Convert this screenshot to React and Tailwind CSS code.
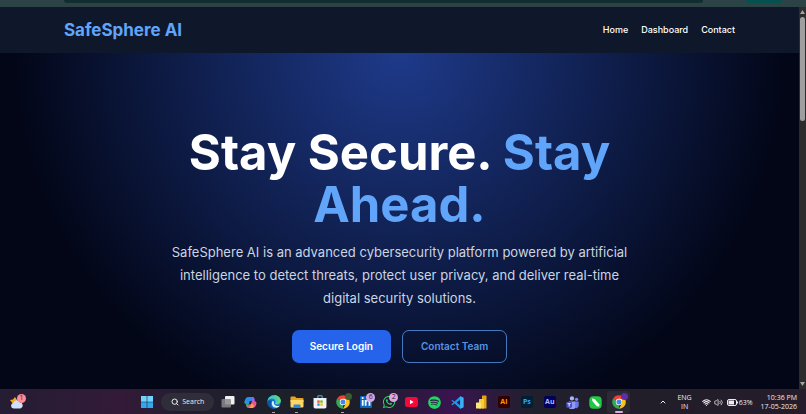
import {
  ChevronUp,
  Search,
  Volume2,
  Wifi,
} from "lucide-react";
import { FaLinkedinIn, FaSpotify, FaWhatsapp } from "react-icons/fa";

const navLinks = ["Home", "Dashboard", "Contact"];

function BrowserEdge() {
  return (
    <div className="flex h-[7px] items-start justify-between bg-[#2b4344] pl-[8%] pr-[3%]">
      <div className="h-[3px] w-[89%] rounded-b-md bg-[#112d2e]" />
      <div className="h-[3px] w-[5%] rounded-b-md bg-[#04514f]" />
    </div>
  );
}

function Navbar() {
  return (
    <nav className="flex h-[46px] items-center justify-between bg-[#0f172a] px-[8%]">
      <a href="#home" className="text-[17px] leading-6 font-bold text-[#60a5fa]">
        SafeSphere AI
      </a>
      <div className="flex gap-[13px]">
        {navLinks.map((link) => (
          <a
            key={link}
            href={`#${link.toLowerCase()}`}
            className="text-[9px] leading-4 font-medium text-white"
          >
            {link}
          </a>
        ))}
      </div>
    </nav>
  );
}

function Hero() {
  return (
    <section className="flex flex-1 flex-col items-center bg-[radial-gradient(circle_at_top,#1e3a8a,#020617_74%)] px-6 pt-[74px] pb-[26px] text-center">
      <h1 className="max-w-[480px] text-[49px] leading-[52px] font-bold text-white">
        Stay Secure. <span className="text-[#60a5fa]">Stay Ahead.</span>
      </h1>
      <p className="mt-[10px] max-w-[470px] text-[13px] leading-[23px] text-[#cbd5e1]">
        SafeSphere AI is an advanced cybersecurity platform powered by artificial
        intelligence to detect threats, protect user privacy, and deliver
        real-time digital security solutions.
      </p>
      <div className="mt-5 flex gap-[11px]">
        <button className="h-[33px] rounded-[7px] bg-[#2563eb] px-[18px] text-[10px] font-semibold text-white">
          Secure Login
        </button>
        <button className="h-[33px] rounded-[7px] border border-[#60a5fa]/70 px-[18px] text-[10px] font-semibold text-[#60a5fa]/90">
          Contact Team
        </button>
      </div>
    </section>
  );
}

function Scrollbar() {
  return (
    <div className="flex w-[7px] flex-col items-center justify-between bg-[#2c2c2c] py-[3px]">
      <div className="flex flex-1 flex-col items-center gap-[3px]">
        <svg viewBox="0 0 5 4" className="h-1 w-[5px]">
          <path d="M2.5 0L5 4H0z" fill="#a3a3a3" />
        </svg>
        <div className="h-[28%] w-[5px] rounded-full bg-[#9f9f9f]" />
      </div>
      <svg viewBox="0 0 5 4" className="h-1 w-[5px]">
        <path d="M2.5 4L0 0h5z" fill="#a3a3a3" />
      </svg>
    </div>
  );
}

function WeatherIcon() {
  return (
    <svg viewBox="0 0 14 14" className="size-[14px]">
      <path d="M0 5l3-.5L5 2l2 3v4H3z" fill="#f6a623" />
      <path
        d="M3.500 13.500a2.800 2.800 0 0 1-.3-5.500 3.600 3.600 0 0 1 6.800-.4 3 3 0 0 1 .5 5.900z"
        fill="#cfe0fb"
      />
    </svg>
  );
}

function StartIcon() {
  return (
    <svg viewBox="0 0 12 12" className="size-3">
      <path d="M0 0h5.700v5.700H0zM6.300 0H12v5.700H6.300z" fill="#6fd3fb" />
      <path d="M0 6.300h5.700V12H0zM6.300 6.300H12V12H6.300z" fill="#2fa8ee" />
    </svg>
  );
}

function TaskViewIcon() {
  return (
    <svg viewBox="0 0 14 12" className="h-3 w-[14px]">
      <rect x="4" y="0" width="9.500" height="8.500" rx="1" fill="#f1f1f1" />
      <rect x="0.500" y="3" width="9.500" height="8.500" rx="1" fill="#8a8a8c" opacity=".85" />
    </svg>
  );
}

function CopilotIcon() {
  return (
    <svg viewBox="0 0 24 24" className="size-[13px]">
      <path d="M9 2h7c2 0 2.500 1.500 3 3l.6 2h-5L12 15H6.500C2 15 0 13 1.500 8.500 3 4 4.500 2 9 2z" fill="#2b8fe8" />
      <path d="M1.500 9C0 13 2 15 6 15h3l-1 5c-.5 1.500-2.500 1.500-3 0z" fill="#46c06d" />
      <path d="M15 22H8c-2 0-2.500-1.500-3-3l-.6-2h5L12 9h5.500C22 9 24 11 22.500 15.500 21 20 19.500 22 15 22z" fill="#e8588a" />
      <path d="M8 22c3 0 3.500-3 4.500-6l1-3 5 5-2 4z" fill="#f7a145" />
      <path d="M14 9l2-7c2 0 2.500 1.500 3 3l1.200 4.500z" fill="#a660e8" />
      <path d="M10.500 9h4L13 15H9z" fill="#25202f" />
    </svg>
  );
}

function EdgeIcon() {
  return (
    <svg viewBox="0 0 24 24" className="size-[14px]">
      <circle cx="12" cy="12" r="11.500" fill="#1379cf" />
      <path d="M.6 11C2 3.500 7 .5 12.500.5 19 .5 23.500 5 23.500 10c0 4-3 6-6 6-2.500 0-4-1-3.500-2.500C16 9 12 6 8 6.500 4.500 7 1.500 8.500.6 11z" fill="#43c8b9" />
      <path d="M12 .5c7 0 11.500 4.500 11.500 9.500 0 4-3 6-6 6-2 0-3-.7-3.500-1.500 6-1 6-9-2-14z" fill="#65d66b" />
      <path d="M9 11c-2 4 0 9 5 10.500 3 .8 6-.5 8-3-3 1-9 .5-10-4-.3-1.300 0-2.500-.5-3.500-.5-1-2-1-2.500 0z" fill="#dbeefb" />
      <path d="M8 10c-3 5-1 11 4 13.500C5 23.500.5 18 .5 12 2 9 6 8 8 10z" fill="#0d55a5" />
    </svg>
  );
}

function ExplorerIcon() {
  return (
    <svg viewBox="0 0 14 12" className="h-3 w-[14px]">
      <path d="M.5 1.500a1 1 0 0 1 1-1H5l1.500 1.500h6a1 1 0 0 1 1 1V6H.5z" fill="#e6a423" />
      <path d="M.5 4h13v6.500a1 1 0 0 1-1 1h-11a1 1 0 0 1-1-1z" fill="#fdd766" />
      <path d="M3.500 11.500V9.500a1 1 0 0 1 1-1h5a1 1 0 0 1 1 1v2z" fill="#2f87d8" />
    </svg>
  );
}

function StoreIcon() {
  return (
    <svg viewBox="0 0 13 13" className="size-[14px]">
      <path d="M4.500 3V1.500a.8.8 0 0 1 .8-.8h2.400a.8.8 0 0 1 .8.8V3" fill="none" stroke="#48b5ee" />
      <path d="M.5 2.800h12V11a1.500 1.500 0 0 1-1.500 1.500H2A1.500 1.500 0 0 1 .5 11z" fill="#eff3f7" />
      <path d="M4 5h2.200v2.200H4z" fill="#f05125" />
      <path d="M6.800 5H9v2.200H6.800z" fill="#7eb900" />
      <path d="M4 7.800h2.200V10H4z" fill="#139ee6" />
      <path d="M6.800 7.800H9V10H6.800z" fill="#fdb813" />
    </svg>
  );
}

function ChromeIcon() {
  return (
    <svg viewBox="0 0 24 24" className="size-[14px]">
      <path d="M12 12L2 6.200A11.500 11.500 0 0 1 22 6.200z" fill="#ea4335" />
      <path d="M12 12v11.500A11.500 11.500 0 0 1 2 6.200z" fill="#34a853" />
      <path d="M12 6.500h10.200a11.500 11.500 0 0 1-10.200 17l4.800-8.700z" fill="#fbc116" />
      <circle cx="12" cy="12" r="5.500" fill="#fff" />
      <circle cx="12" cy="12" r="4.300" fill="#4285f4" />
    </svg>
  );
}

function LinkedInIcon() {
  return (
    <span className="flex size-3 items-center justify-center rounded-[1px] bg-[#0a66c2]">
      <FaLinkedinIn className="size-[10px] text-white" />
    </span>
  );
}

function YouTubeIcon() {
  return (
    <svg viewBox="0 0 13 10" className="h-[10px] w-[13px]">
      <rect width="13" height="10" rx="2.500" fill="#f6083a" />
      <path d="M5 2.800v4.400L8.700 5z" fill="#fff" />
    </svg>
  );
}

function VsCodeIcon() {
  return (
    <svg viewBox="0 0 24 24" className="size-[13px]">
      <path d="M17 .5L6.500 10.200 2.700 7.200 .6 8.300 4.700 12 .6 15.700l2.100 1.200 3.800-3L17 23.500l6-2.800V3.300zM17 7v10l-6.500-5z" fill="#2196e3" fillRule="evenodd" />
      <path d="M17 .5l6 2.800v17.400l-6 2.800z" fill="#3cb0f5" />
    </svg>
  );
}

function PowerBiIcon() {
  return (
    <svg viewBox="0 0 12 14" className="h-[14px] w-3">
      <rect x="7" y="0.500" width="4.500" height="13" rx="0.600" fill="#e3a512" />
      <rect x="4" y="4" width="5" height="9.500" rx="0.600" fill="#f6cc3a" />
      <rect x="1" y="7.500" width="5" height="6" rx="0.600" fill="#fde477" />
    </svg>
  );
}

function TeamsIcon() {
  return (
    <svg viewBox="0 0 24 24" className="size-[13px]">
      <circle cx="11" cy="4.500" r="4" fill="#a9b4ff" />
      <circle cx="19.500" cy="6" r="3" fill="#7f88ea" />
      <path d="M15 10h8.500v7a5 5 0 0 1-8.500 4z" fill="#6d78e6" />
      <path d="M5 10h12v8a6 6 0 0 1-12 2z" fill="#9298f8" />
      <rect x="0.500" y="11" width="10.500" height="10.500" rx="1.500" fill="#4950bd" />
      <path d="M2.800 13.300h6v1.600H6.700v4.600H4.900v-4.600H2.800z" fill="#fff" />
    </svg>
  );
}

function NotesIcon() {
  return (
    <svg viewBox="0 0 13 13" className="size-[13px]">
      <rect x="0.300" y="0.300" width="12.400" height="12.400" rx="4" fill="#20c943" />
      <path d="M3 2.600L5.600 3l4.600 5.200.1 2.400-2.500-.3L3.300 5z" fill="#fff" />
    </svg>
  );
}

function WhatsAppIcon() {
  return <FaWhatsapp className="size-[14px] text-[#2bd366]" />;
}

function SpotifyIcon() {
  return <FaSpotify className="size-[13px] text-[#1ed760]" />;
}

function AiIcon() {
  return (
    <span className="flex size-3 items-center justify-center rounded-[2px] bg-[#330000] text-[7px] font-bold text-[#ff9a00]">
      Ai
    </span>
  );
}

function PsIcon() {
  return (
    <span className="flex size-3 items-center justify-center rounded-[2px] bg-[#001e36] text-[7px] font-bold text-[#31a8ff]">
      Ps
    </span>
  );
}

function AuIcon() {
  return (
    <span className="flex size-3 items-center justify-center rounded-[2px] bg-[#00005b] text-[7px] font-bold text-[#b9b9ff]">
      Au
    </span>
  );
}

const apps = [
  { name: "Task View", Icon: TaskViewIcon },
  { name: "Copilot", Icon: CopilotIcon },
  { name: "Edge", Icon: EdgeIcon, open: true },
  { name: "File Explorer", Icon: ExplorerIcon, open: true },
  { name: "Store", Icon: StoreIcon },
  { name: "Chrome", Icon: ChromeIcon, open: true, profile: "bg-[#3c5a34]" },
  { name: "LinkedIn", Icon: LinkedInIcon, badge: "6" },
  { name: "WhatsApp", Icon: WhatsAppIcon, badge: "2" },
  { name: "YouTube", Icon: YouTubeIcon },
  { name: "Spotify", Icon: SpotifyIcon },
  { name: "VS Code", Icon: VsCodeIcon },
  { name: "Power BI", Icon: PowerBiIcon },
  { name: "Illustrator", Icon: AiIcon },
  { name: "Photoshop", Icon: PsIcon },
  { name: "Audition", Icon: AuIcon },
  { name: "Teams", Icon: TeamsIcon },
  { name: "Notes", Icon: NotesIcon },
  { name: "Chrome work", Icon: ChromeIcon, active: true, profile: "bg-[#5a2fa8]" },
];

function AppButton({ name, Icon, open, active, badge, profile }) {
  return (
    <button
      aria-label={name}
      className={`relative flex h-[22px] w-[23px] items-center justify-center rounded-[3px] ${
        active ? "bg-white/5" : ""
      }`}
    >
      <Icon />
      {badge && (
        <span className="absolute top-[2px] right-[2px] flex size-[9px] items-center justify-center rounded-full bg-[#d9a5e3] text-[7px] text-[#33203a]">
          {badge}
        </span>
      )}
      {profile && (
        <span className={`absolute top-[2px] right-[2px] size-[7px] rounded-full ${profile}`} />
      )}
      {open && <span className="absolute bottom-0 h-px w-[3px] bg-[#a8a8ad]" />}
      {active && <span className="absolute bottom-0 h-[2px] w-2 rounded-full bg-[#dcaae6]" />}
    </button>
  );
}

function Taskbar() {
  return (
    <footer className="flex h-[25px] items-center border-t border-[#24202f] bg-[linear-gradient(90deg,#241d33_0%,#331a38_15%,#241d30_22%,#1c2029_35%,#1e1d2a_46%,#3a1450_56%,#20202c_66%,#211d29_82%,#261c2b_100%)] font-['Open_Sans',sans-serif] text-[7px] text-[#ececf0]">
      <div className="w-1/6 pl-[10px]">
        <button aria-label="Weather" className="relative block">
          <WeatherIcon />
          <span className="absolute -top-[1px] -right-[2px] flex size-[9px] items-center justify-center rounded-full bg-[#ff8b95] text-[7px] text-[#5b1820]">
            1
          </span>
        </button>
      </div>
      <div className="flex items-center">
        <button aria-label="Start" className="flex w-[25px] justify-center">
          <StartIcon />
        </button>
        <button className="mx-[2px] flex h-[18px] w-[53px] items-center justify-center gap-[3px] rounded-full bg-[#302d3a]">
          <Search className="size-2" strokeWidth={3} />
          Search
        </button>
        {apps.map((app) => (
          <AppButton key={app.name} {...app} />
        ))}
      </div>
      <div className="ml-auto flex items-center pr-[9px] leading-[9px]">
        <ChevronUp className="mr-[10px] size-2" strokeWidth={3} />
        <div className="mr-[10px] text-center">
          ENG
          <br />
          IN
        </div>
        <Wifi className="mr-[3px] size-[9px]" strokeWidth={3} />
        <Volume2 className="mr-1 size-[9px]" strokeWidth={2} />
        <svg viewBox="0 0 11 7" className="mr-px h-[7px] w-[11px]">
          <rect x="0.500" y="0.500" width="9" height="6" rx="1.500" fill="none" stroke="#ececf0" />
          <rect x="1.500" y="1.500" width="5.500" height="4" fill="#ececf0" />
          <path d="M10.500 2.500v2" stroke="#ececf0" />
        </svg>
        <span className="mr-2">63%</span>
        <div className="text-right">
          10:36 PM
          <br />
          17-05-2026
        </div>
      </div>
    </footer>
  );
}

export default function App() {
  return (
    <div className="flex min-h-screen flex-col bg-[#020617] font-[Inter,sans-serif]">
      <BrowserEdge />
      <div className="flex flex-1">
        <main className="flex min-w-0 flex-1 flex-col">
          <Navbar />
          <Hero />
        </main>
        <Scrollbar />
      </div>
      <Taskbar />
    </div>
  );
}
